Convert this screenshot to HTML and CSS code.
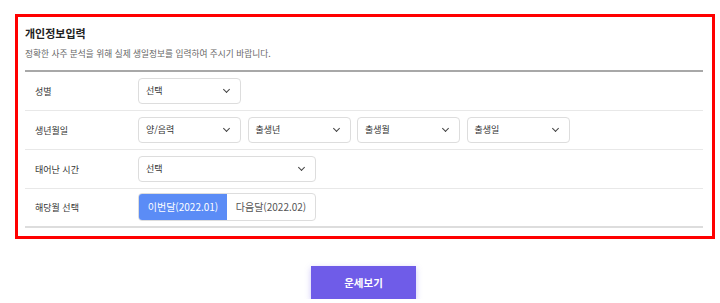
FILE: index.html
```html
<!DOCTYPE html>
<html lang="ko">
<head>
<meta charset="UTF-8">
<meta name="viewport" content="width=device-width, initial-scale=1.0">
<title>개인정보입력</title>
<link rel="stylesheet" href="styles.css">
</head>
<body>
<div class="page">
  <div class="info-box">
    <h2 class="info-title">개인정보입력</h2>
    <p class="info-desc">정확한 사주 분석을 위해 실제 생일정보를 입력하여 주시기 바랍니다.</p>
    <div class="form-table">
      <div class="form-row">
        <div class="form-label">성별</div>
        <div class="form-field">
          <div class="select">선택<span class="chev"></span></div>
        </div>
      </div>
      <div class="form-row">
        <div class="form-label">생년월일</div>
        <div class="form-field">
          <div class="select">양/음력<span class="chev"></span></div>
          <div class="select">출생년<span class="chev"></span></div>
          <div class="select">출생월<span class="chev"></span></div>
          <div class="select">출생일<span class="chev"></span></div>
        </div>
      </div>
      <div class="form-row">
        <div class="form-label">태어난 시간</div>
        <div class="form-field">
          <div class="select wide">선택<span class="chev"></span></div>
        </div>
      </div>
      <div class="form-row last">
        <div class="form-label">해당월 선택</div>
        <div class="form-field">
          <div class="month-tabs">
            <div class="month-tab active">이번달(2022.01)</div>
            <div class="month-tab">다음달(2022.02)</div>
          </div>
        </div>
      </div>
    </div>
  </div>
  <div class="submit-wrap">
    <button class="submit-btn">운세보기</button>
  </div>
</div>
</body>
</html>
```

FILE: styles.css
```css
  /* Basic page */
  body {
    margin: 0;
    background: #fff;
    font-family: "Noto Sans CJK KR", "Noto Sans", sans-serif;
    color: #333;
  }
  .page {
    padding: 14px 5px 0 15px;
  }
  /* Red outlined box */
  .info-box {
    width: 678px;
    border: 3px solid #f00;
    padding: 0 9px 8px 7px;
  }
  .info-title {
    margin: 0;
    padding-top: 8px;
    font-size: 11px;
    font-weight: bold;
    line-height: 16px;
    color: #222;
  }
  .info-desc {
    margin: 6px 0 0;
    font-size: 8.7px;
    line-height: 13px;
    color: #666;
  }
  /* Form rows */
  .form-table {
    margin-top: 10px;
    border-top: 2px solid #a8a8a8;
    border-bottom: 2px solid #ddd;
  }
  .form-row {
    display: flex;
    align-items: center;
    height: 38px;
    border-bottom: 1px solid #e8e8e8;
  }
  .form-row.last {
    border-bottom: none;
    height: 37px;
  }
  .form-label {
    width: 103px;
    padding-left: 10px;
    font-size: 9px;
    color: #333;
  }
  .form-field {
    display: flex;
    gap: 6.5px;
  }
  .select {
    position: relative;
    box-sizing: border-box;
    width: 103px;
    height: 26px;
    line-height: 24px;
    padding-left: 7px;
    border: 1px solid #ddd;
    border-radius: 4px;
    font-size: 9px;
    color: #333;
  }
  .select.wide {
    width: 178px;
  }
  .chev {
    position: absolute;
    right: 11px;
    top: 8px;
    width: 4px;
    height: 4px;
    border-right: 1.3px solid #444;
    border-bottom: 1.3px solid #444;
    transform: rotate(45deg);
  }
  /* Month toggle */
  .month-tabs {
    display: flex;
    box-sizing: border-box;
    width: 178px;
    height: 28px;
    margin-top: -1px;
    border: 1px solid #ddd;
    border-radius: 4px;
    overflow: hidden;
  }
  .month-tab {
    flex: 1;
    text-align: center;
    line-height: 26px;
    font-size: 10px;
    color: #555;
  }
  .month-tab.active {
    background: #5b8cf6;
    color: #fff;
  }
  /* Submit button */
  .submit-wrap {
    padding-top: 27px;
    padding-left: 296px;
  }
  .submit-btn {
    width: 105px;
    height: 33px;
    border: none;
    background: #6f5ce8;
    color: #fff;
    font-family: inherit;
    font-size: 10.5px;
    font-weight: bold;
    box-shadow: 0 2px 6px rgba(111, 92, 232, 0.35);
    cursor: pointer;
  }
```
